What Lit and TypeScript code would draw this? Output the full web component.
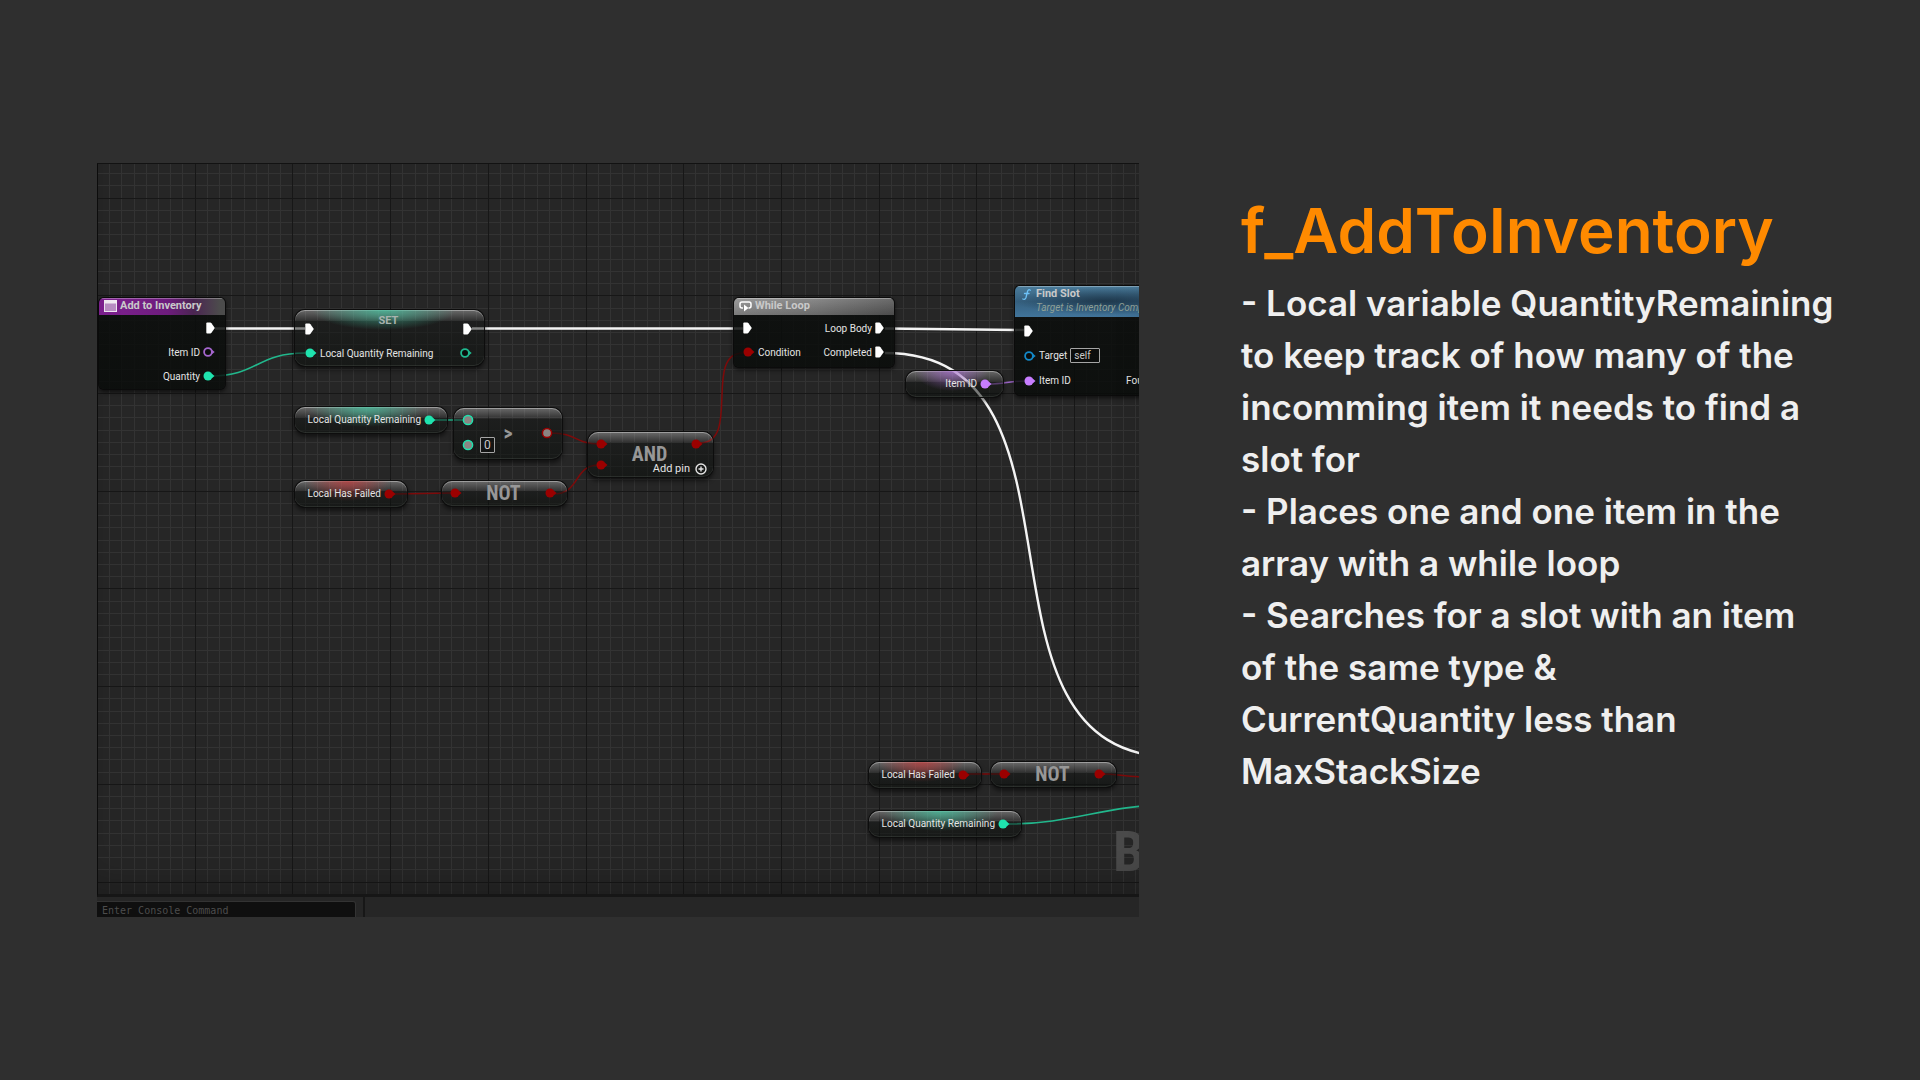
import { LitElement, html, svg, css } from "lit";
import { customElement } from "lit/decorators.js";

const TEAL = "#1fe3ae";
const RED = "#9b0000";
const VIOLET = "#c77dff";

const MAJOR = 97.7;
const range = (n: number) => Array.from({ length: n }, (_, i) => i);
const minorAt = (i: number) => Math.round((i * MAJOR) / 8);

const execPin = () => html`<svg class="pin" width="9" height="12" viewBox="0 0 9 12">
  <path d="M.3 1.6Q.3.6 1.2.6H4.2Q5 .6 5.5 1.3L8.8 6 5.500 10.700Q5 11.400 4.200 11.400H1.200Q.3 11.400.3 10.400Z" fill="#fff" />
</svg>`;

const pin = (color: string) => html`<svg class="pin" width="12" height="10" viewBox="0 0 12 10">
  <path d="M8.500 2.500 11.500 5 8.500 7.500Z" fill=${color} />
  <circle cx="5" cy="5" r="4.500" fill=${color} />
</svg>`;

const hollowPin = (color: string) => html`<svg class="pin" width="12" height="10" viewBox="0 0 12 10">
  <path d="M8.500 2.500 11.700 5 8.500 7.500Z" fill=${color} />
  <circle cx="5" cy="5" r="3.900" fill="#0b0d0c" stroke=${color} stroke-width="1.800" />
</svg>`;

const wildPin = (color: string) => html`<svg class="pin" width="12" height="12" viewBox="0 0 12 12">
  <circle cx="6" cy="6" r="4.600" fill="#8b8583" stroke=${color} stroke-width="1.500" />
</svg>`;

@customElement("app-root")
export class AppRoot extends LitElement {
  static styles = css`
    :host {
      display: block;
      background: #2f2f2f;
      font-family: Inter, "Liberation Sans", sans-serif;
    }
    .page {
      box-sizing: border-box;
      min-height: 100vh;
      display: grid;
      grid-template-columns: minmax(0, 1042fr) minmax(0, 594fr);
      column-gap: 102px;
      align-content: center;
      padding: 0 85px 0 97px;
    }
    .editor {
      display: flex;
      flex-direction: column;
      aspect-ratio: 1042 / 754;
      overflow: hidden;
      font-family: Roboto, "Liberation Sans", sans-serif;
      font-size: 10px;
      color: #e4e4e4;
    }
    .canvas {
      position: relative;
      flex: 1;
      min-height: 0;
      overflow: hidden;
      background: #262626;
    }
    .canvas::after {
      content: "";
      position: absolute;
      inset: 0;
      border-top: 1px solid #121212;
      border-left: 1px solid #0c0c0c;
      border-bottom: 3px solid #161616;
      box-shadow: inset 0 -30px 40px -20px rgba(0, 0, 0, 0.25);
      pointer-events: none;
    }
    .layer {
      position: absolute;
      top: 0;
      left: 0;
      width: 100%;
      height: 100%;
    }
    .watermark {
      position: absolute;
      left: 1016px;
      top: 657px;
      font: 700 56px/64px "Roboto Condensed", "Liberation Sans Narrow", Roboto, sans-serif;
      color: #4b4b4b;
    }
    .node {
      position: absolute;
      box-sizing: border-box;
      border-radius: 5px;
      background: linear-gradient(rgba(12, 14, 13, 0.88), rgba(8, 11, 9, 0.82));
      box-shadow: 0 0 0 1px #0b0b0b, 0 2px 4px 1px rgba(0, 0, 0, 0.6);
      overflow: hidden;
    }
    .head {
      box-sizing: border-box;
      display: flex;
      align-items: center;
      gap: 3px;
      height: 17px;
      padding: 0 0 1px 5px;
      box-shadow: inset 0 1px 0 rgba(255, 255, 255, 0.3);
      font-weight: 700;
      font-size: 11px;
      line-height: 14px;
      color: #c9c9c9;
    }
    .head.entry {
      background: linear-gradient(90deg, #7f2191, #6d1c7c 55%, #4b2552 75%, #4c4c4c 96%);
    }
    .head.macro {
      background: linear-gradient(rgba(255, 255, 255, 0.14), rgba(0, 0, 0, 0.12)),
        linear-gradient(90deg, #8b8b8b, #777 50%, #555);
    }
    .head.call {
      height: 31px;
      align-items: flex-start;
      padding: 1px 0 0 7px;
      gap: 5px;
      background: radial-gradient(ellipse 90px 14px at 90px 15px, rgba(18, 34, 48, 0.65), transparent),
        linear-gradient(#4b7c9b, #35607f 50%, #41749a);
    }
    .sub {
      font-weight: 400;
      font-style: italic;
      font-size: 10px;
      color: #8fa096;
      white-space: nowrap;
    }
    .rows {
      padding: 1px 10px 0 9px;
    }
    .row {
      display: flex;
      justify-content: space-between;
      align-items: center;
      height: 24px;
    }
    .io {
      display: flex;
      align-items: center;
      gap: 3px;
      white-space: nowrap;
    }
    .out {
      margin-left: auto;
    }
    .pin {
      display: block;
      flex: none;
    }
    .glass {
      border-radius: 10px;
      background: linear-gradient(rgba(200, 200, 200, 0.42), rgba(120, 120, 120, 0.16) 10px, rgba(20, 22, 21, 0.5) 11px, rgba(10, 14, 11, 0.55));
      box-shadow: inset 0 1px 0 rgba(255, 255, 255, 0.35), inset 0 -1px 0 rgba(120, 130, 120, 0.2), 0 0 0 1px #0d0d0d,
        0 3px 4px 1px rgba(0, 0, 0, 0.5);
    }
    .glow::before {
      content: "";
      position: absolute;
      inset: 0;
      background: radial-gradient(ellipse 38% 20px at 47% 0, var(--glow), transparent);
    }
    .teal {
      --glow: rgba(70, 195, 160, 0.75);
    }
    .red {
      --glow: rgba(190, 60, 60, 0.75);
    }
    .violet {
      --glow: rgba(170, 110, 210, 0.7);
    }
    .pill {
      display: flex;
      align-items: center;
      justify-content: flex-end;
      gap: 3px;
      height: 26px;
      padding: 0 11px 1px 0;
      white-space: nowrap;
    }
    .pill > * {
      position: relative;
    }
    .set {
      padding: 7px 12px 0 10px;
    }
    .set .row {
      position: relative;
    }
    .set .exec {
      align-items: stretch;
    }
    .set .exec .pin {
      align-self: center;
    }
    .set-title {
      font-weight: 700;
      font-size: 11px;
      line-height: 8px;
      color: #a9b3af;
    }
    .op {
      display: flex;
      justify-content: space-between;
      align-items: center;
      height: 25px;
      padding: 0 10px 1px 8px;
    }
    .op-name {
      font: 700 20px/24px "Roboto Condensed", "Liberation Sans Narrow", Roboto, sans-serif;
      color: #979797;
    }
    .compare {
      display: grid;
      grid-template-columns: 36px 20px 1fr;
      align-items: center;
      justify-items: center;
      padding: 0 9px 1px 8px;
    }
    .compare > .pin {
      justify-self: end;
    }
    .stack {
      display: grid;
      gap: 9px;
      align-self: start;
      justify-self: start;
      padding-top: 4px;
    }
    .field {
      display: flex;
      align-items: center;
      gap: 6px;
      height: 16px;
    }
    .value {
      box-sizing: border-box;
      height: 16px;
      border: 1px solid #a5a5a5;
      border-radius: 1px;
      background: rgba(0, 0, 0, 0.2);
      color: #c9c9c9;
      font: inherit;
      padding: 0 3px;
      margin: 0;
      outline: none;
    }
    .digit {
      width: 15px;
      font-size: 12px;
    }
    .self {
      width: 30px;
      height: 15px;
    }
    .and {
      display: grid;
      grid-template-columns: 12px 1fr 12px;
      grid-template-rows: 24px 17px;
      padding: 0 10px 0 8px;
    }
    .and .pin {
      align-self: center;
    }
    .and .op-name {
      text-align: center;
      line-height: 44px;
      height: 24px;
    }
    .add {
      grid-column: 2 / 4;
      justify-self: end;
      align-self: start;
      display: flex;
      align-items: center;
      gap: 5px;
      height: 16px;
      border: 0;
      padding: 0;
      margin: 5px -4px 0 0;
      background: none;
      color: #e4e4e4;
      font: 11px/14px Roboto, sans-serif;
    }
    .console {
      display: flex;
      height: 20px;
      background: #262626;
    }
    .console-box {
      display: flex;
      padding-top: 4px;
      border-right: 2px solid #171717;
      padding-right: 7px;
    }
    .console-input {
      box-sizing: border-box;
      width: 259px;
      height: 20px;
      border: 1px solid #333;
      border-left: 0;
      border-radius: 0 3px 0 0;
      background: #0f0f0f;
      color: #8a8a8a;
      font: 10px/14px "DejaVu Sans Mono", "Liberation Mono", monospace;
      padding: 0 5px 2px;
      outline: none;
    }
    .console-input::placeholder {
      color: #4d4d4d;
      opacity: 1;
    }
    .notes {
      padding-top: 32px;
      color: #efefef;
    }
    .title {
      margin: 0 0 10px;
      font-weight: 600;
      font-size: 62px;
      line-height: 72px;
      color: #ff8a00;
    }
    .note {
      margin: 0;
      font-weight: 600;
      font-size: 35px;
      line-height: 52px;
    }
    .n-entry { left: 2px; top: 135px; width: 126px; height: 91px; }
    .n-set { left: 198px; top: 147px; width: 189px; height: 56px; }
    .n-qty { left: 198px; top: 244px; width: 152px; }
    .n-gt { left: 357px; top: 245px; width: 108px; height: 51px; }
    .n-failed { left: 198px; top: 318px; width: 112px; }
    .n-not { left: 345px; top: 318px; width: 125px; }
    .n-and { left: 491px; top: 269px; width: 125px; height: 45px; }
    .n-while { left: 637px; top: 135px; width: 160px; height: 69px; }
    .n-item { left: 809px; top: 208px; width: 97px; }
    .n-find { left: 918px; top: 123px; width: 260px; height: 109px; }
    .n-failed2 { left: 772px; top: 599px; width: 112px; }
    .n-not2 { left: 894px; top: 599px; width: 125px; }
    .n-qty2 { left: 772px; top: 648px; width: 152px; }
    .n-find .rows { padding: 1px 0 0 9px; }
    .n-find .row { height: 25px; }
    .n-find .last { display: grid; grid-template-columns: 102px auto; justify-content: start; }
  `;

  private grid() {
    return svg`
      <g stroke="#333333" stroke-width="1">
        ${range(88).map((i) => svg`<line x1=${minorAt(i) + 0.5} x2=${minorAt(i) + 0.5} y1="0" y2="100%" />`)}
        ${range(64).map((i) => svg`<line y1=${minorAt(i) - 1.5} y2=${minorAt(i) - 1.5} x1="0" x2="100%" />`)}
      </g>
      <g stroke="#171717" stroke-width="1">
        ${range(12).map((i) => svg`<line x1=${minorAt(i * 8) + 0.5} x2=${minorAt(i * 8) + 0.5} y1="0" y2="100%" />`)}
        ${range(8).map((i) => svg`<line y1=${minorAt(i * 8 + 3) - 1.5} y2=${minorAt(i * 8 + 3) - 1.5} x1="0" x2="100%" />`)}
      </g>`;
  }

  private wires() {
    return svg`
      <g fill="none" stroke="#f4f4f4" stroke-width="2.400">
        <path d="M118 165.500H208M375 165.500H646M788 165.500 927 167" />
        <path d="M788 190C1013 190 853 594 1078 594" />
      </g>
      <g fill="none" stroke="#22b88d" stroke-width="1.600">
        <path d="M114 213C160 213 160 190 208 190" />
        <path d="M338 257H366" />
        <path d="M912 661C975 661 1010 642 1070 642" />
      </g>
      <g fill="none" stroke="#7e0a0a" stroke-width="1.500">
        <path d="M296 331 356 330" />
        <path d="M454 270C480 270 478 281 502 281" />
        <path d="M456 331C484 331 476 302 502 302" />
        <path d="M603 280C644 280 606 190 646 190" />
        <path d="M870 611H905M1006 611C1020 611 1030 614 1050 614" />
      </g>
      <path d="M892 221C906 221 914 218 928 218" fill="none" stroke="#9a63c4" stroke-width="1.600" />`;
  }

  private variable(place: string, tint: string, name: string, color: string) {
    return html`<div class="node glass glow pill ${tint} ${place}"><span>${name}</span>${pin(color)}</div>`;
  }

  private not(place: string) {
    return html`<div class="node glass op ${place}">${pin(RED)}<span class="op-name">NOT</span>${pin(RED)}</div>`;
  }

  render() {
    return html`<main class="page">
      <section class="editor">
        <div class="canvas">
          <svg class="layer" aria-hidden="true">${this.grid()}</svg>
          <span class="watermark">BLUEPRINT</span>
          <svg class="layer" aria-hidden="true">${this.wires()}</svg>

          <div class="node n-entry">
            <div class="head entry">
              <svg class="pin" width="13" height="12" viewBox="0 0 13 12">
                <rect x=".5" y=".5" width="12" height="11" fill="#b98fc4" stroke="#efe6f2" />
                <rect x="0" y="0" width="13" height="3.500" fill="#f2ecf4" />
              </svg>
              Add to Inventory
            </div>
            <div class="rows">
              <div class="row"><div class="io out">${execPin()}</div></div>
              <div class="row"><div class="io out">Item ID ${hollowPin("#a566cf")}</div></div>
              <div class="row"><div class="io out">Quantity ${pin(TEAL)}</div></div>
            </div>
          </div>

          <div class="node glass glow teal set n-set">
            <div class="row exec">${execPin()}<span class="set-title">SET</span>${execPin()}</div>
            <div class="row">
              <div class="io">${pin(TEAL)} Local Quantity Remaining</div>
              ${hollowPin("#1fb88f")}
            </div>
          </div>

          ${this.variable("n-qty", "teal", "Local Quantity Remaining", TEAL)}
          <div class="node glass compare n-gt">
            <div class="stack">
              <div class="field">${wildPin(TEAL)}</div>
              <div class="field">${wildPin(TEAL)}<input class="value digit" aria-label="Compare with" value="0" /></div>
            </div>
            <span class="op-name">&gt;</span>
            ${wildPin(RED)}
          </div>

          ${this.variable("n-failed", "red", "Local Has Failed", RED)} ${this.not("n-not")}

          <div class="node glass and n-and">
            ${pin(RED)}<span class="op-name">AND</span>${pin(RED)} ${pin(RED)}
            <button class="add" type="button">
              Add pin
              <svg class="pin" width="12" height="12" viewBox="0 0 12 12">
                <circle cx="6" cy="6" r="5" fill="none" stroke="#e4e4e4" stroke-width="1.400" />
                <path d="M6 3.500V8.500M3.500 6H8.500" stroke="#e4e4e4" stroke-width="1.400" />
              </svg>
            </button>
          </div>

          <div class="node n-while">
            <div class="head macro">
              <svg class="pin" width="13" height="12" viewBox="0 0 13 12">
                <path d="M4 8H3Q1 8 1 6V4Q1 2 3 2H10Q12 2 12 4V6Q12 8 10 8H9.500" fill="none" stroke="#fff" stroke-width="1.500" />
                <path d="M5 4.500V11.500L9.500 8Z" fill="#fff" />
              </svg>
              While Loop
            </div>
            <div class="rows">
              <div class="row">${execPin()}<div class="io">Loop Body ${execPin()}</div></div>
              <div class="row"><div class="io">${pin(RED)} Condition</div><div class="io">Completed ${execPin()}</div></div>
            </div>
          </div>

          ${this.variable("n-item", "violet", "Item ID", VIOLET)}

          <div class="node n-find">
            <div class="head call">
              <svg class="pin" width="9" height="14" viewBox="0 0 9 14">
                <path d="M8.300 3.200Q6.300 1.800 5.500 4.500L4 10.500Q3.200 13 .8 12M2.500 6.500H7" fill="none" stroke="#6cc0f5" stroke-width="1.300" stroke-linecap="round" />
              </svg>
              <div>
                <div>Find Slot</div>
                <div class="sub">Target is Inventory Component</div>
              </div>
            </div>
            <div class="rows">
              <div class="row">${execPin()}</div>
              <div class="row">
                <label class="io">${hollowPin("#1389c9")} Target <input class="value self" value="self" /></label>
              </div>
              <div class="row last"><div class="io">${pin(VIOLET)} Item ID</div><div class="io">Found Slot</div></div>
            </div>
          </div>

          ${this.variable("n-failed2", "red", "Local Has Failed", RED)} ${this.not("n-not2")}
          ${this.variable("n-qty2", "teal", "Local Quantity Remaining", TEAL)}
        </div>
        <div class="console">
          <div class="console-box">
            <input class="console-input" aria-label="Console command" placeholder="Enter Console Command" />
          </div>
        </div>
      </section>

      <article class="notes">
        <h1 class="title">f_AddToInventory</h1>
        <p class="note">- Local variable QuantityRemaining to keep track of how many of the incomming item it needs to find a slot for</p>
        <p class="note">- Places one and one item in the array with a while loop</p>
        <p class="note">- Searches for a slot with an item of the same type &amp; CurrentQuantity less than MaxStackSize</p>
      </article>
    </main>`;
  }
}
